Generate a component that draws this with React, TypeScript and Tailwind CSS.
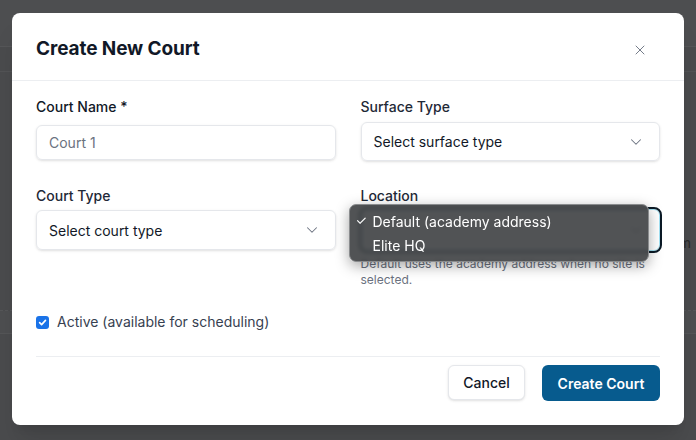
import React from "react";
import { X, ChevronDown } from "lucide-react";

function Chevron() {
  return <ChevronDown size={18} strokeWidth={1.4} className="text-[#6b7280]" />;
}

export default function App() {
  return (
    <div
      className="relative w-[696px] h-[440px] overflow-hidden bg-[#4a4b4d]"
      style={{ fontFamily: "Inter, 'Noto Sans', sans-serif" }}
    >
      {/* dimmed page behind */}
      <div className="flex flex-col">
        <div className="h-[47px] bg-[#4d4e50] border-b border-[#555658]" />
        <div className="h-[25px] border-b border-[#525355]" />
        <div className="h-[160px]" />
        <div className="flex h-[26px] justify-end pr-[5px] text-[14px] text-[#2a2b2c]">m</div>
        <div className="h-[53px] border-b border-dashed border-[#555658]" />
        <div className="h-[23px] bg-[#4d4e50] border-b border-[#545557]" />
      </div>

      {/* modal */}
      <div className="absolute left-[12px] top-[13px] w-[672px] h-[412px] rounded-[8px] bg-white flex flex-col shadow-xl">
        <div className="h-[68px] pt-[6px] flex items-center justify-between px-6 border-b border-[#eceef1]">
          <h2 className="text-[19px] font-bold text-[#111827] tracking-[-0.1px]">
            Create New Court
          </h2>
          <X size={16} strokeWidth={1.4} className="text-[#6b7280] mr-[12px]" />
        </div>

        <div className="px-6 pt-4">
          <div className="grid grid-cols-2 gap-x-[25px]">
            <div className="flex flex-col">
              <label className="text-[14px] leading-5 font-medium text-[#111827]">Court Name *</label>
              <div className="mt-[8px] h-[35px] rounded-[6px] border border-[#e5e7eb] shadow-sm flex items-center px-[12px] text-[14px] text-[#6b7280]">
                Court 1
              </div>
            </div>
            <div className="flex flex-col">
              <label className="text-[14px] leading-5 font-medium text-[#1f2937]">Surface Type</label>
              <div className="mt-[5px] h-[39px] rounded-[6px] border border-[#e5e7eb] shadow-sm flex items-center justify-between pl-[12px] pr-[14px] text-[14px] text-[#111827]">
                <span>Select surface type</span>
                <Chevron />
              </div>
            </div>
          </div>

          <div className="grid grid-cols-2 gap-x-[25px] mt-[25px]">
            <div className="flex flex-col">
              <label className="text-[14px] leading-5 font-medium text-[#1f2937]">Court Type</label>
              <div className="mt-[4px] h-[40px] rounded-[6px] border border-[#e5e7eb] shadow-sm flex items-center justify-between pl-[12px] pr-[14px] text-[14px] text-[#111827]">
                <span>Select court type</span>
                <Chevron />
              </div>
            </div>
            <div className="relative flex flex-col">
              <label className="text-[14px] leading-5 font-medium text-[#1f2937]">Location</label>
              <div className="mt-[3px] h-[42px] rounded-[6px] border border-[#a5e3f5] outline outline-2 outline-[#0b1a26] flex items-center justify-end pl-[12px] pr-[14px] text-[14px] text-[#111827]">
                <Chevron />
              </div>
              <p className="mt-[5px] text-[12px] leading-4 text-[#6b7280]">
                Default uses the academy address when no site is selected.
              </p>

              {/* native select menu */}
              <div className="absolute left-[-12px] top-[18px] w-[300px] h-[58px] rounded-[7px] border border-[#8a8c8e] bg-[#3e4042]/90 backdrop-blur-[2px] shadow-[0_4px_14px_rgba(0,0,0,0.35)] flex flex-col justify-center py-[4px] text-[14px] text-white">
                <div className="flex items-center h-[24px] pl-[6px]">
                  <span className="w-[17px] text-[13px]">✓</span>
                  <span>Default (academy address)</span>
                </div>
                <div className="flex items-center h-[24px] pl-[23px]">
                  <span>Elite HQ</span>
                </div>
              </div>
            </div>
          </div>

          <div className="mt-[24px] flex items-center gap-[8px]">
            <span className="w-[13px] h-[13px] rounded-[3px] bg-[#1a73e8] flex items-center justify-center">
              <svg width="9" height="9" viewBox="0 0 10 10" fill="none">
                <path d="M1.8 5.2 L4 7.4 L8.3 2.6" stroke="white" strokeWidth="1.8" strokeLinecap="round" strokeLinejoin="round" />
              </svg>
            </span>
            <span className="text-[14px] leading-5 text-[#374151]">Active (available for scheduling)</span>
          </div>

          <div className="mt-[24px] border-t border-[#eceef1] pt-[8px] flex justify-end gap-[17px]">
            <button className="h-[35px] w-[77px] rounded-[6px] border border-[#e5e7eb] bg-white shadow-sm text-[14px] font-medium text-[#111827]">
              Cancel
            </button>
            <button className="h-[36px] w-[118px] rounded-[6px] bg-[#075b8e] text-[14px] font-semibold text-white">
              Create Court
            </button>
          </div>
        </div>
      </div>
    </div>
  );
}
